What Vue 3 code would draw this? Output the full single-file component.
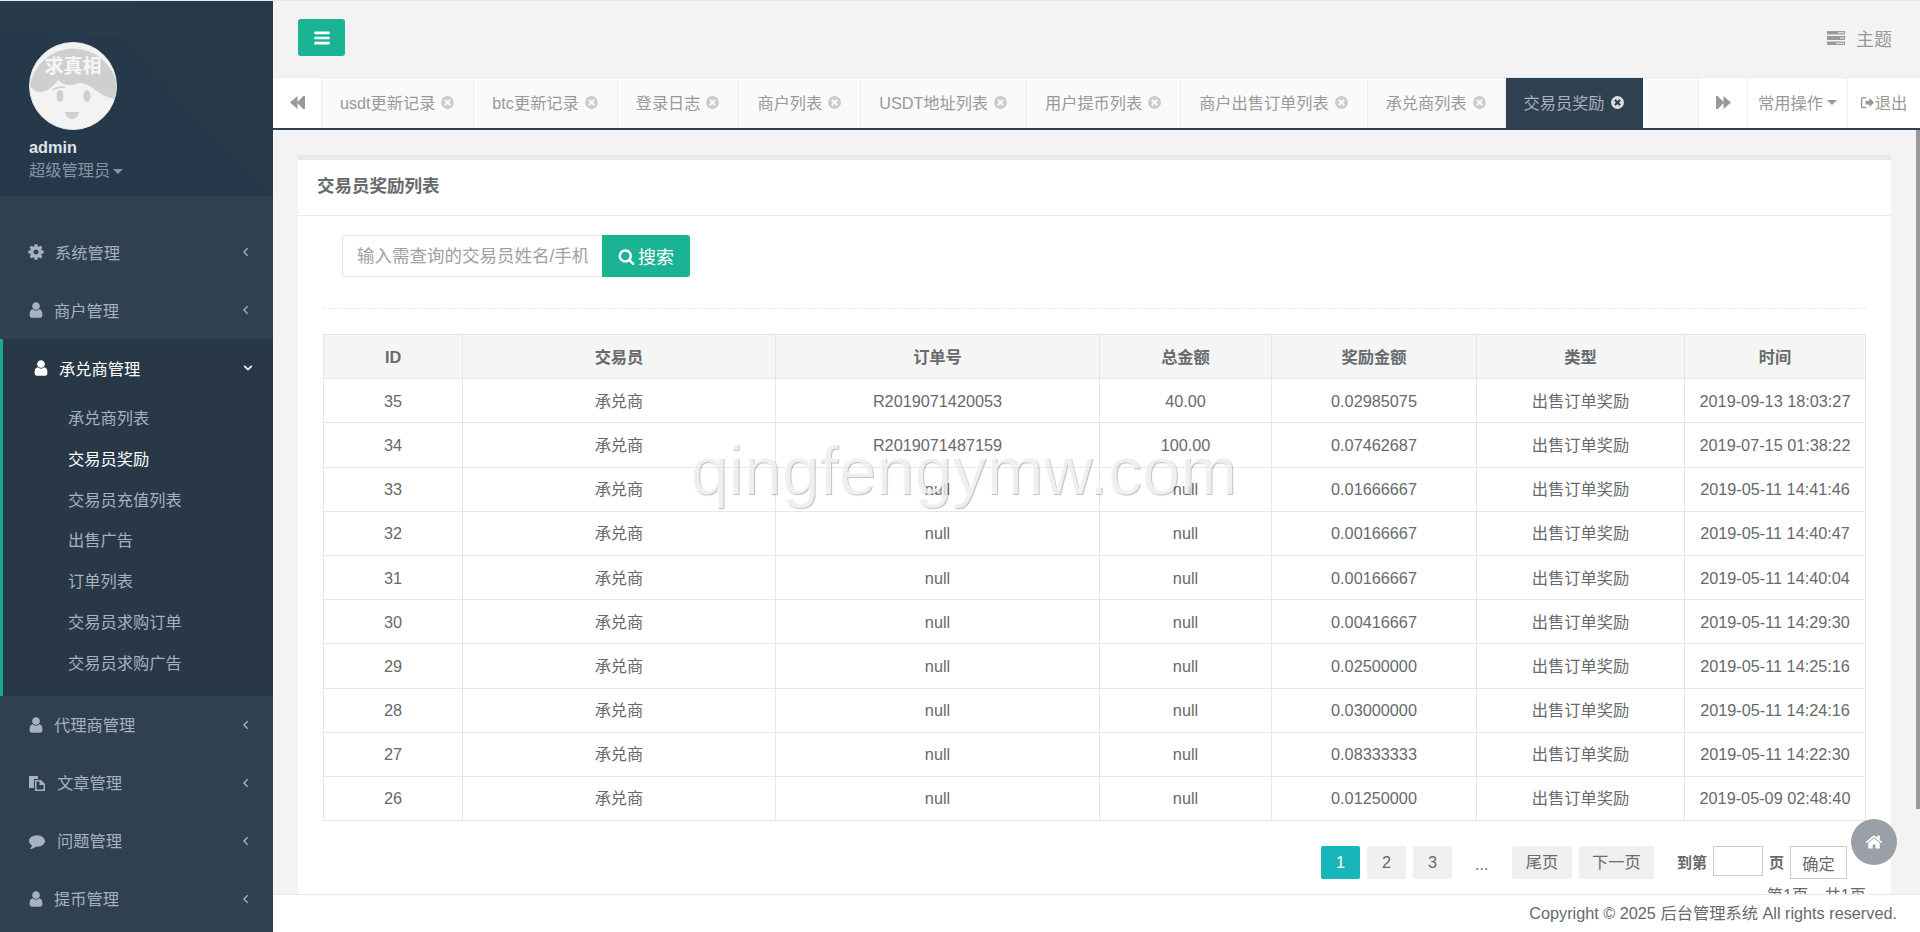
<template>
  <div class="app">
    <aside class="sidebar">
      <div class="profile">
        <svg class="profile-bg" viewBox="0 0 273 196" preserveAspectRatio="none">
          <polygon points="0,0 145,0 120,36 0,30" fill="#283b4b" />
          <polygon points="145,0 273,0 273,196 120,36" fill="#283a49" />
          <polygon points="120,36 273,196 0,196 0,30" fill="#26394a" />
        </svg>
        <svg class="avatar" viewBox="0 0 88 88">
          <circle cx="44" cy="44" r="43.5" fill="#f3f3f3" stroke="#e8e8e8" />
          <path d="M1 44C3 47 7 50 11 50C18 50 24 45 29 38C32 41 36 43 42 43C46 43 49 41 52 41C58 42 62 44 66 48C71 52 77 55 85 57C87 52 88 48 88 44A44 44 0 0 0 1 44Z" fill="#cfcfcf" />
          <ellipse cx="31" cy="54" rx="3.5" ry="6" fill="#cfcfcf" />
          <ellipse cx="58" cy="54" rx="3.5" ry="6" fill="#cfcfcf" />
          <path d="M24 48C27 45 31 45 36 45" fill="none" stroke="#cfcfcf" stroke-width="1.6" />
          <path d="M36 70H50C49 75 46 77 43 77C40 77 37 75 36 70Z" fill="#cfcfcf" />
          <text class="avatar-text" x="44" y="31" text-anchor="middle">求真相</text>
        </svg>
        <div class="profile-name">admin</div>
        <div class="profile-role">超级管理员<span class="caret"></span></div>
      </div>

      <ul class="menu">
        <li v-for="item in menu" :key="item.label" class="menu-group" :class="{ open: item.children }">
          <div class="menu-item" :class="{ 'menu-item-open': item.children }">
            <svg class="menu-icon" :viewBox="icons[item.icon].box">
              <path :d="icons[item.icon].d" fill-rule="evenodd" />
            </svg>
            <span class="menu-label" :style="{ marginLeft: item.gap + 'px' }">{{ item.label }}</span>
            <svg class="chevron" viewBox="0 0 12 12">
              <path :d="item.children ? 'M1.5 3.5L6 8l4.5-4.5' : 'M8 1.5L3.5 6 8 10.5'" />
            </svg>
          </div>
          <ul v-if="item.children" class="submenu">
            <li v-for="sub in item.children" :key="sub" :class="{ current: sub === '交易员奖励' }">{{ sub }}</li>
          </ul>
        </li>
      </ul>
    </aside>

    <div class="main">
      <header class="topbar">
        <button class="toggle">
          <svg class="toggle-icon" :viewBox="icons.bars.box"><path :d="icons.bars.d" /></svg>
        </button>
        <div class="theme">
          <svg class="theme-icon" :viewBox="icons.tasks.box"><path :d="icons.tasks.d" fill-rule="evenodd" /></svg>
          <span>主题</span>
        </div>
      </header>

      <nav class="tabs">
        <div class="tab-btn tab-back">
          <svg class="tab-arrow" :viewBox="icons.back.box"><path :d="icons.back.d" /></svg>
        </div>
        <div class="tab-list">
          <div v-for="tab in tabs" :key="tab" class="tab" :class="{ active: tab === '交易员奖励' }">
            <span>{{ tab }}</span>
            <svg class="tab-close" :viewBox="icons.close.box"><path :d="icons.close.d" /></svg>
          </div>
        </div>
        <div class="tab-btn tab-forward">
          <svg class="tab-arrow" :viewBox="icons.forward.box"><path :d="icons.forward.d" /></svg>
        </div>
        <div class="tab-btn tab-ops">常用操作<span class="caret caret-tab"></span></div>
        <div class="tab-btn tab-exit">
          <svg class="exit-icon" :viewBox="icons.exit.box"><path :d="icons.exit.d" /></svg>退出
        </div>
      </nav>

      <section class="content">
        <div class="card">
          <div class="card-title">交易员奖励列表</div>
          <div class="card-body">
            <form class="search" @submit.prevent>
              <input class="search-input" type="text" placeholder="输入需查询的交易员姓名/手机号" />
              <button class="search-btn">
                <svg class="search-icon" :viewBox="icons.search.box"><path :d="icons.search.d" /></svg>搜索
              </button>
            </form>
            <div class="dashed"></div>

            <table class="table">
              <colgroup>
                <col v-for="w in colWidths" :key="w" :style="{ width: w + 'px' }" />
              </colgroup>
              <thead>
                <tr>
                  <th v-for="h in headers" :key="h">{{ h }}</th>
                </tr>
              </thead>
              <tbody>
                <tr v-for="row in rows" :key="row.id">
                  <td>{{ row.id }}</td>
                  <td>承兑商</td>
                  <td>{{ row.order }}</td>
                  <td>{{ row.total }}</td>
                  <td>{{ row.reward }}</td>
                  <td>出售订单奖励</td>
                  <td>{{ row.time }}</td>
                </tr>
              </tbody>
            </table>

            <div class="pager">
              <span class="page page-on">1</span>
              <span class="page">2</span>
              <span class="page">3</span>
              <span class="page-dots">...</span>
              <span class="page page-wide">尾页</span>
              <span class="page page-next">下一页</span>
              <b class="page-to">到第</b>
              <input class="page-input" type="text" />
              <b class="page-unit">页</b>
              <button class="page-ok">确定</button>
            </div>
            <div class="page-info">第1页，共1页</div>
          </div>
        </div>

        <div class="watermark">qingfengymw.com</div>
        <div class="scroll-thumb"></div>
        <div class="home-btn">
          <svg class="home-icon" :viewBox="icons.home.box"><path :d="icons.home.d" /></svg>
        </div>
      </section>

      <footer class="footer">Copyright © 2025 后台管理系统 All rights reserved.</footer>
    </div>
  </div>
</template>

<script setup>
const fa = '0 0 1792 1792'

const icons = {
  user: { box: fa, d: 'M1536 1399q0 109-62.5 187t-150.5 78h-854q-88 0-150.5-78t-62.5-187q0-85 8.5-160.5t31.5-152 58.5-131 94-89 134.5-34.5q131 128 313 128t313-128q76 0 134.5 34.5t94 89 58.5 131 31.5 152 8.5 160.5zm-256-887q0 159-112.5 271.5t-271.5 112.5-271.5-112.5-112.5-271.5 112.5-271.5 271.5-112.5 271.5 112.5 112.5 271.5z' },
  cog: { box: fa, d: 'M1152 896q0-106-75-181t-181-75-181 75-75 181 75 181 181 75 181-75 75-181zm512-109v222q0 12-8 23t-20 13l-185 28q-19 54-39 91 35 50 107 138 10 12 10 25t-9 23q-27 37-99 108t-94 71q-12 0-26-9l-138-108q-44 23-91 38-16 136-29 186-7 28-36 28h-222q-14 0-24.5-8.5t-11.5-21.5l-28-184q-49-16-90-37l-141 107q-10 9-25 9-14 0-25-11-126-114-165-168-7-10-7-23 0-12 8-23 15-21 51-66.5t54-70.5q-27-50-41-99l-183-27q-13-2-21-12.5t-8-23.5v-222q0-12 8-23t19-13l186-28q14-46 39-92-40-57-107-138-10-12-10-24 0-10 9-23 26-36 98.5-107.5t94.5-71.5q13 0 26 10l138 107q44-23 91-38 16-136 29-186 7-28 36-28h222q14 0 24.5 8.5t11.5 21.5l28 184q49 16 90 37l142-107q9-9 24-9 13 0 25 10 129 119 165 170 7 8 7 22 0 12-8 23-15 21-51 66.5t-54 70.5q26 50 41 98l183 28q13 2 21 12.5t8 23.5z' },
  files: { box: '-2 -1 18 18', d: 'M0 1h9v3H5v9H0zM6 5h6l4 4v7H6zM7.5 6.5v8h7V10h-4V6.5z' },
  comment: { box: '-224 -112 2016 2016', d: 'M1792 896q0 174-120 321.5t-326 233-450 85.5q-70 0-145-8-198 175-460 242-49 14-114 22-17 2-30.5-9t-17.5-29v-1q-3-4-.5-12t2-10 4.5-9.5l6-9 7-8.5 8-9q7-8 31-34.5t34.5-38 31-39.5 32.5-51 27-59 26-76q-157-89-247.5-220t-90.5-281q0-130 71-248.5t191-204.5 286-136.5 348-50.5q244 0 450 85.5t326 233 120 321.5z' },
  bars: { box: fa, d: 'M1664 1344v128q0 26-19 45t-45 19h-1408q-26 0-45-19t-19-45v-128q0-26 19-45t45-19h1408q26 0 45 19t19 45zm0-512v128q0 26-19 45t-45 19h-1408q-26 0-45-19t-19-45v-128q0-26 19-45t45-19h1408q26 0 45 19t19 45zm0-512v128q0 26-19 45t-45 19h-1408q-26 0-45-19t-19-45v-128q0-26 19-45t45-19h1408q26 0 45 19t19 45z' },
  search: { box: fa, d: 'M1216 832q0-185-131.5-316.5t-316.5-131.5-316.5 131.5-131.5 316.5 131.5 316.5 316.5 131.5 316.5-131.5 131.5-316.5zm512 832q0 52-38 90t-90 38q-54 0-90-38l-343-342q-179 124-399 124-143 0-273.5-55.5t-225-150-150-225-55.5-273.5 55.5-273.5 150-225 225-150 273.5-55.5 273.5 55.5 225 150 150 225 55.5 273.5q0 220-124 399l343 343q37 37 37 90z' },
  close: { box: fa, d: 'M1277 1122q0-26-19-45l-181-181 181-181q19-19 19-45 0-27-19-46l-90-90q-19-19-46-19-26 0-45 19l-181 181-181-181q-19-19-45-19-27 0-46 19l-90 90q-19 19-19 46 0 26 19 45l181 181-181 181q-19 19-19 45 0 27 19 46l90 90q19 19 46 19 26 0 45-19l181-181 181 181q19 19 45 19 27 0 46-19l90-90q19-19 19-46zm387-226q0 209-103 385.5t-279.5 279.5-385.5 103-385.5-103-279.5-279.5-103-385.5 103-385.5 279.5-279.5 385.5-103 385.5 103 279.5 279.5 103 385.5z' },
  home: { box: fa, d: 'M1472 992v480q0 26-19 45t-45 19h-384v-384h-256v384h-384q-26 0-45-19t-19-45v-480q0-1 .5-3t.5-3l575-474 575 474q1 2 1 6zm223-69l-62 74q-8 9-21 11h-3q-13 0-21-7l-692-577-692 577q-12 8-24 7-13-2-21-11l-62-74q-8-10-7-23.5t11-21.5l719-599q32-26 76-26t76 26l244 204v-195q0-14 9-23t23-9h192q14 0 23 9t9 23v408l219 182q10 8 11 21.5t-7 23.5z' },
  back: { box: '0 0 16 16', d: 'M8 1L0 8l8 7V8.5L14 15l2 0V1l-2 0L8 7.5z' },
  forward: { box: '0 0 16 16', d: 'M8 1l8 7-8 7V8.5L2 15H0V1h2l6 6.5z' },
  tasks: { box: '0 0 18 14', d: 'M0 0h18v3.5H0zM11 1.2h6v1.1h-6zM0 5h18v4H0zM13 6.4h4v1.2h-4zM0 10.5h18V14H0zM9 11.7h8v1.1H9z' },
  exit: { box: '0 0 16 16', d: 'M7 2H3Q1 2 1 4v8q0 2 2 2h4v-1.5H3q-.5 0-.5-.5V4q0-.5.5-.5h4zM6 6h4V3l5 5-5 5v-3H6z' }
}

const menu = [
  { label: '系统管理', icon: 'cog', gap: 10 },
  { label: '商户管理', icon: 'user', gap: 9 },
  {
    label: '承兑商管理',
    icon: 'user',
    gap: 9,
    children: ['承兑商列表', '交易员奖励', '交易员充值列表', '出售广告', '订单列表', '交易员求购订单', '交易员求购广告']
  },
  { label: '代理商管理', icon: 'user', gap: 9 },
  { label: '文章管理', icon: 'files', gap: 12 },
  { label: '问题管理', icon: 'comment', gap: 12 },
  { label: '提币管理', icon: 'user', gap: 9 }
]

const tabs = ['usdt更新记录', 'btc更新记录', '登录日志', '商户列表', 'USDT地址列表', '用户提币列表', '商户出售订单列表', '承兑商列表', '交易员奖励']

const headers = ['ID', '交易员', '订单号', '总金额', '奖励金额', '类型', '时间']
const colWidths = [139, 313, 324, 172, 205, 208, 181]

const rows = [
  { id: 35, order: 'R2019071420053', total: '40.00', reward: '0.02985075', time: '2019-09-13 18:03:27' },
  { id: 34, order: 'R2019071487159', total: '100.00', reward: '0.07462687', time: '2019-07-15 01:38:22' },
  { id: 33, order: 'null', total: 'null', reward: '0.01666667', time: '2019-05-11 14:41:46' },
  { id: 32, order: 'null', total: 'null', reward: '0.00166667', time: '2019-05-11 14:40:47' },
  { id: 31, order: 'null', total: 'null', reward: '0.00166667', time: '2019-05-11 14:40:04' },
  { id: 30, order: 'null', total: 'null', reward: '0.00416667', time: '2019-05-11 14:29:30' },
  { id: 29, order: 'null', total: 'null', reward: '0.02500000', time: '2019-05-11 14:25:16' },
  { id: 28, order: 'null', total: 'null', reward: '0.03000000', time: '2019-05-11 14:24:16' },
  { id: 27, order: 'null', total: 'null', reward: '0.08333333', time: '2019-05-11 14:22:30' },
  { id: 26, order: 'null', total: 'null', reward: '0.01250000', time: '2019-05-09 02:48:40' }
]
</script>

<style>
html,
body {
  margin: 0;
  background: #f3f3f4;
  overflow: hidden;
}
</style>

<style scoped>
.app {
  display: flex;
  height: 931px;
  border-top: 1px solid #e7eaec;
  overflow: hidden;
  font-family: "Liberation Sans", "Noto Sans CJK SC", sans-serif;
  font-size: 16.25px;
  color: #676a6c;
}

/* sidebar */
.sidebar {
  width: 273px;
  flex: none;
  background: #2f4050;
}

.profile {
  position: relative;
  box-sizing: border-box;
  height: 195px;
  padding: 41px 0 0 29px;
  overflow: hidden;
}

.profile-bg {
  position: absolute;
  left: 0;
  top: 0;
  width: 100%;
  height: 100%;
}

.avatar {
  position: relative;
  display: block;
  width: 88px;
  height: 88px;
}

.avatar-text {
  font-size: 19px;
  font-weight: bold;
  fill: #f6f6f6;
}

.profile-name {
  position: relative;
  margin-top: 6px;
  font-weight: bold;
  line-height: 22px;
  color: #dfe4ed;
}

.profile-role {
  position: relative;
  line-height: 24px;
  color: #8095a8;
}

.caret {
  display: inline-block;
  margin-left: 3px;
  vertical-align: middle;
  border-top: 5px solid #8095a8;
  border-left: 5px solid transparent;
  border-right: 5px solid transparent;
}

.menu {
  margin: 0;
  padding: 27px 0 0;
  list-style: none;
}

.menu-item {
  display: flex;
  align-items: center;
  height: 58px;
  padding-left: 27px;
  color: #a7b1c2;
}

.menu-icon {
  flex: none;
  width: 18px;
  height: 18px;
  fill: #a7b1c2;
}

.menu-label {
  margin-bottom: 1px;
}

.chevron {
  width: 10px;
  height: 10px;
  margin-left: auto;
  margin-right: 22px;
  fill: none;
  stroke: #a7b1c2;
  stroke-width: 1.6;
}

.open {
  background: #293846;
  border-left: 3px solid #19aa8d;
}

.menu-item-open {
  padding-left: 29px;
  color: #fff;
}

.menu-item-open .menu-icon {
  fill: #fff;
}

.menu-item-open .chevron {
  stroke: #fff;
  stroke-width: 2;
  margin-right: 20px;
}

.submenu {
  margin: 0;
  padding: 1px 0 12px 65px;
  list-style: none;
  line-height: 40.8px;
  color: #a7b1c2;
}

.current {
  color: #fff;
}

/* top bar */
.main {
  position: relative;
  flex: 1;
  min-width: 0;
  display: flex;
  flex-direction: column;
}

.topbar {
  display: flex;
  align-items: center;
  justify-content: space-between;
  height: 76px;
  flex: none;
  padding: 0 28px 3px 25px;
  box-sizing: border-box;
  background: #f3f3f4;
}

.toggle {
  width: 47px;
  height: 37px;
  padding: 0;
  border: 0;
  border-radius: 3px;
  background: #1ab394;
}

.toggle-icon {
  display: block;
  width: 18px;
  height: 18px;
  margin: auto;
  fill: #fff;
}

.theme {
  display: flex;
  align-items: center;
  gap: 11px;
  font-size: 18px;
  color: #999;
}

.theme-icon {
  width: 18px;
  height: 14px;
  fill: #999;
}

/* tabs */
.tabs {
  display: flex;
  flex: none;
  box-sizing: border-box;
  height: 53px;
  border-top: 1px solid #e7eaec;
  border-bottom: 2px solid #2f4050;
  background: #fafafa;
  color: #999;
}

.tab-btn {
  display: flex;
  align-items: center;
  justify-content: center;
  flex: none;
  box-sizing: border-box;
  padding-bottom: 2px;
  background: #fff;
}

.tab-back {
  width: 49px;
  border-right: 1px solid #eee;
}

.tab-forward {
  width: 50px;
  border-left: 1px solid #eee;
  border-right: 1px solid #eee;
}

.tab-ops {
  width: 100px;
  border-right: 1px solid #eee;
}

.tab-exit {
  width: 72px;
  padding-right: 1px;
}

.tab-arrow {
  width: 15px;
  height: 15px;
  fill: #999;
}

.tab-list {
  display: flex;
  flex: 1;
  min-width: 0;
  overflow: hidden;
  font-size: 16.2px;
}

.tab {
  display: flex;
  align-items: center;
  flex: none;
  gap: 5px;
  padding: 0 18px 2px;
  border-right: 1px solid #eee;
}

.tab-close {
  width: 15px;
  height: 15px;
  fill: #ccc;
}

.tab.active {
  background: #2f4050;
  border-right: 0;
  color: #a7b1c2;
}

.tab.active .tab-close {
  fill: #dcdcdc;
}

.caret-tab {
  margin-left: 4px;
  border-top-color: #999;
}

.exit-icon {
  width: 15px;
  height: 15px;
  fill: #999;
}

/* content */
.content {
  position: relative;
  flex: 1;
  min-height: 0;
  padding: 25px 29px 0 25px;
  overflow: hidden;
  background: #f3f3f4;
}

.card {
  border-top: 5px solid #e7eaec;
  background: #fff;
}

.card-title {
  height: 55px;
  padding-left: 19px;
  border-bottom: 1px solid #e7eaec;
  font-size: 17.5px;
  font-weight: bold;
  line-height: 53px;
}

.card-body {
  padding: 19px 25px 20px;
}

.search {
  display: flex;
  margin-left: 19px;
}

.search-input {
  box-sizing: border-box;
  width: 260px;
  height: 42px;
  padding: 0 14px;
  border: 1px solid #e5e6e7;
  border-right: 0;
  border-radius: 3px 0 0 3px;
  outline: none;
  font: inherit;
  font-size: 17.5px;
  color: #676a6c;
}

.search-input::placeholder {
  color: #a0a0a0;
  opacity: 1;
}

.search-btn {
  display: flex;
  align-items: center;
  justify-content: center;
  gap: 3px;
  width: 88px;
  height: 42px;
  padding: 0;
  border: 0;
  border-radius: 0 3px 3px 0;
  background: #1ab394;
  color: #fff;
  font: inherit;
  font-size: 18px;
}

.search-icon {
  width: 17px;
  height: 17px;
  fill: #fff;
}

.dashed {
  margin: 31px 0 25px;
  border-top: 1px dashed #e7eaec;
}

.table {
  width: 1542px;
  border-collapse: collapse;
  table-layout: fixed;
}

.table th,
.table td {
  height: 43.2px;
  padding: 0;
  border: 1px solid #e7e7e7;
  text-align: center;
  line-height: 20px;
}

.table th {
  background: #f5f5f6;
  font-weight: bold;
}

.pager {
  display: flex;
  align-items: flex-start;
  justify-content: flex-end;
  margin-top: 25px;
  padding-right: 19px;
}

.page {
  box-sizing: border-box;
  width: 39px;
  height: 33px;
  margin-right: 7px;
  border-radius: 2px;
  background: #f1f0f1;
  text-align: center;
  line-height: 33px;
}

.page-on {
  background: #17b6ba;
  color: #fff;
}

.page-dots {
  width: 12px;
  margin: 0 25px 0 16px;
  line-height: 36px;
}

.page-wide {
  width: 60px;
}

.page-next {
  width: 75px;
  margin-right: 23px;
}

.page-to,
.page-unit {
  font-size: 15px;
  line-height: 33px;
}

.page-input {
  box-sizing: border-box;
  width: 50px;
  height: 30px;
  margin: 0 6px;
  padding: 0;
  border: 1px solid #ccc;
  outline: none;
}

.page-ok {
  box-sizing: border-box;
  width: 57px;
  height: 33px;
  margin-left: 6px;
  padding: 0;
  border: 1px solid #ccc;
  background: #fff;
  font: inherit;
  color: #676a6c;
}

.page-info {
  margin-top: 3px;
  text-align: right;
  line-height: 20px;
}

.watermark {
  position: absolute;
  left: 417px;
  top: 300px;
  font-size: 68.3px;
  line-height: 80px;
  color: rgba(255, 255, 255, 0.75);
  text-shadow: 1px 1px 1px rgba(0, 0, 0, 0.25);
  white-space: nowrap;
  pointer-events: none;
}

.scroll-thumb {
  position: absolute;
  right: 0;
  top: 0;
  width: 4px;
  height: 679px;
  background: #999;
}

.home-btn {
  position: absolute;
  left: 1578px;
  top: 689px;
  display: flex;
  align-items: center;
  justify-content: center;
  width: 46px;
  height: 46px;
  border-radius: 50%;
  background: #99a0a7;
}

.home-icon {
  width: 18px;
  height: 18px;
  fill: #fff;
}

.footer {
  flex: none;
  box-sizing: border-box;
  height: 38px;
  padding-right: 23px;
  border-top: 1px solid #e7eaec;
  background: #fff;
  text-align: right;
  line-height: 37px;
}
</style>
